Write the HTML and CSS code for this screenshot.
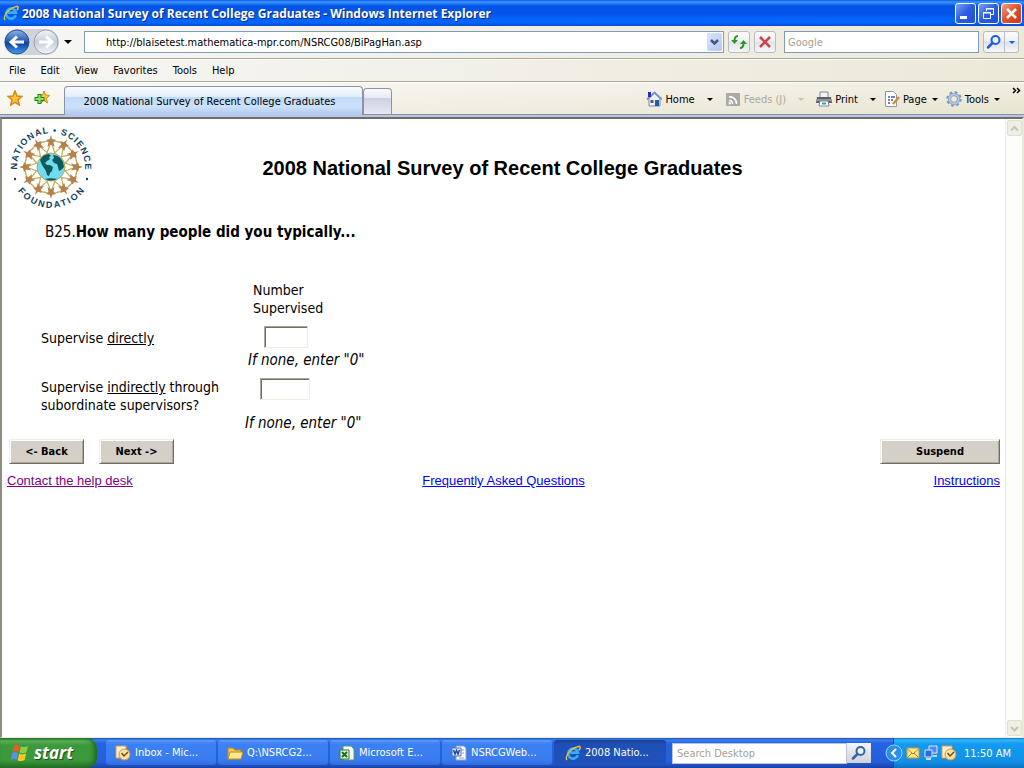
FILE: index.html
```
<!DOCTYPE html>
<html lang="en">
<head>
    <meta charset="utf-8">
    <title>2008 National Survey of Recent College Graduates</title>
    <link rel="stylesheet" href="styles.css">
</head>
<body>
    <!-- Shared icons -->
    <svg class="defs" width="0" height="0" aria-hidden="true">
        <defs>
            <linearGradient id="ballBlue" x1="0" y1="0" x2="0" y2="1">
                <stop offset="0" stop-color="#8fb2e6"/>
                <stop offset="0.45" stop-color="#2a5cb8"/>
                <stop offset="0.55" stop-color="#0b3f9e"/>
                <stop offset="1" stop-color="#4aa0f2"/>
            </linearGradient>
            <linearGradient id="ballGray" x1="0" y1="0" x2="0" y2="1">
                <stop offset="0" stop-color="#f4f6f9"/>
                <stop offset="0.5" stop-color="#c3ccd8"/>
                <stop offset="1" stop-color="#f6f9fc"/>
            </linearGradient>
            <symbol id="ie" viewBox="0 0 16 16">
                <path d="M12.8 10.3A5 5 0 1 1 13 7.6H5" fill="none" stroke="#35aef5" stroke-width="2.6"/>
                <path d="M2 15C-.5 12 5 3 14.500 1.300c1.500 1 .3 3-.6 4" fill="none" stroke="#f3bd3c" stroke-width="1.400"/>
            </symbol>
            <symbol id="outlook" viewBox="0 0 16 16">
                <path d="M1 1h10v4L5 13H1z" fill="#fff3dc" stroke="#e6953c"/>
                <circle cx="9.500" cy="9.500" r="5.500" fill="#fbe2ab" stroke="#e08a2c"/>
                <path d="M6.500 8l2.500 3 4-4" fill="none" stroke="#7a4a10" stroke-width="1.500"/>
            </symbol>
            <symbol id="lens" viewBox="0 0 16 16">
                <circle cx="9.500" cy="6" r="4" fill="#eaf4ff" stroke="currentColor" stroke-width="2"/>
                <path d="M6.500 9L2 13.500" stroke="currentColor" stroke-width="2.500" stroke-linecap="round"/>
            </symbol>
            <symbol id="person" viewBox="-8 -12 16 24">
                <path d="M-7.500 0L-4-1 0-1.500 4-1 7.500 0M0 0L-4 11M0 0L4 11" stroke="#c4aa5c" stroke-width="1.200" fill="none"/>
                <path d="M0-7l1.200 4L5-2 2.500 0.500 3.500 5 0 2.500-3.500 5-2.500 0.500-5-2-1.200-3z" fill="#b5814c"/>
            </symbol>
        </defs>
    </svg>

    <header class="titlebar">
        <svg class="icon"><use href="#ie"/></svg>
        <span class="titlebar-text">2008 National Survey of Recent College Graduates - Windows Internet Explorer</span>
        <div class="window-buttons">
            <button class="win-btn" aria-label="Minimize"><svg width="19" height="19"><path d="M4 13.500h7" stroke="#fff" stroke-width="3"/></svg></button>
            <button class="win-btn" aria-label="Restore"><svg width="19" height="19" fill="none" stroke="#fff"><path d="M7.500 7V4.500h7v6H12M7 5h8M4.500 8.500h7v6h-7zM4 9h8"/></svg></button>
            <button class="win-btn win-close" aria-label="Close"><svg width="19" height="19"><path d="M5 5l9 9M14 5l-9 9" stroke="#fff" stroke-width="2.500"/></svg></button>
        </div>
    </header>

    <div class="navbar">
        <div class="nav-balls">
            <button class="ball" aria-label="Back"><svg width="26" height="26"><circle cx="13" cy="13" r="12" fill="url(#ballBlue)" stroke="#2d4f8c"/><path d="M20 13H8M13 7.500L7 13l6 5.500" fill="none" stroke="#fff" stroke-width="3"/></svg></button>
            <button class="ball" aria-label="Forward"><svg width="26" height="26"><circle cx="13" cy="13" r="12" fill="url(#ballGray)" stroke="#98a2b0"/><path d="M6 13h12M13 7.500l6 5.500-6 5.500" fill="none" stroke="#fff" stroke-width="3"/></svg></button>
        </div>
        <button class="arrow nav-arrow" aria-label="Recent pages"></button>
        <div class="address">
            <input type="text" aria-label="Address" value="http://blaisetest.mathematica-mpr.com/NSRCG08/BiPagHan.asp">
            <button class="address-drop" aria-label="Show addresses"><svg width="15" height="18"><path d="M4 7l3.500 3.500L11 7" fill="none" stroke="#41557d" stroke-width="2.500"/></svg></button>
        </div>
        <button class="tool-btn" aria-label="Refresh"><svg width="20" height="20"><path d="M9 4C6 4 5.500 6 5.500 9" fill="none" stroke="#2d9a1c" stroke-width="2"/><path d="M2 8h7l-3.500 4z" fill="#2d9a1c"/><path d="M11 16c3 0 3.500-2 3.500-5" fill="none" stroke="#2d9a1c" stroke-width="2"/><path d="M11 12h7l-3.500-4z" fill="#2d9a1c"/></svg></button>
        <button class="tool-btn" aria-label="Stop"><svg width="20" height="20"><path d="M5 5l10 10M15 5L5 15" stroke="#c8474a" stroke-width="2.500"/></svg></button>
        <input class="web-search" type="text" aria-label="Search" placeholder="Google">
        <div class="search-go">
            <button class="tool-btn" aria-label="Search"><svg class="icon blue"><use href="#lens"/></svg></button>
            <button class="tool-btn go-drop" aria-label="Search options"><i class="arrow blue"></i></button>
        </div>
    </div>

    <nav class="menubar">
        <button>File</button>
        <button>Edit</button>
        <button>View</button>
        <button>Favorites</button>
        <button>Tools</button>
        <button>Help</button>
    </nav>

    <div class="tabbar">
        <div class="favorites">
            <button aria-label="Favorites Center"><svg class="icon" viewBox="0 0 16 16"><path d="M8 1l2 5 5 .4-4 3.400 1.300 5.200L8 12.300 3.700 15 5 9.800 1 6.400 6 6z" fill="#ffc63a" stroke="#d98716" stroke-width="1.500"/></svg></button>
            <button aria-label="Add to Favorites"><svg class="icon" viewBox="0 0 16 16"><path d="M10 1l1.600 4 4 .4-3.200 3L13.500 13 10 10.500 6.500 13l1-4.600-3-3 4-.4z" fill="#ffc63a" stroke="#d98716"/><path d="M5.500 4v10M.5 9h10" stroke="#1c8a1c" stroke-width="4"/><path d="M5.500 5v8M1.500 9h8" stroke="#8fe06d" stroke-width="2"/></svg></button>
        </div>
        <button class="tab">2008 National Survey of Recent College Graduates</button>
        <button class="tab-new" aria-label="New Tab"></button>
        <div class="commands">
            <button class="command cmd-home"><svg class="icon" viewBox="0 0 16 16"><path d="M3 7v8h11V7L8.500 2z" fill="#eef1f8" stroke="#7d89a8"/><path d="M1 8.500L8.500 1.500 16 8.500" fill="none" stroke="#7c8fd0" stroke-width="2"/><path d="M2 1h3v5H2z" fill="#1c31c4"/><path d="M9 9h4v6H9z" fill="#2458a8"/><path d="M4.500 9h3v3h-3z" fill="#555c70"/></svg>Home<i class="arrow"></i></button>
            <button class="command cmd-feeds" disabled><svg class="icon" viewBox="0 0 16 16"><rect x="1" y="2" width="14" height="13" rx="1" fill="#aaa9a2"/><path d="M4 6a6.500 6.500 0 0 1 7.500 7M4 9.500a3 3 0 0 1 3.500 3.500" fill="none" stroke="#fff" stroke-width="1.600"/><circle cx="4.800" cy="12.300" r="1.200" fill="#fff"/></svg>Feeds (J)<i class="arrow"></i></button>
            <button class="command cmd-print"><svg class="icon" viewBox="0 0 16 16"><path d="M4 1h8v6H4z" fill="#f4f4f4" stroke="#888"/><path d="M1 6h14l1 6H0z" fill="#5c6068"/><path d="M1 9h14" stroke="#c5c9cf"/><path d="M4 10h8l1 5H3z" fill="#fff" stroke="#888"/><path d="M6 12.500h4" stroke="#2aa5c4" stroke-width="2"/></svg>Print<i class="arrow"></i></button>
            <button class="command cmd-page"><svg class="icon" viewBox="0 0 16 16"><path d="M1.500 .5h8l3 3v12h-11z" fill="#fff" stroke="#8e95a5"/><path d="M4 6h2M4 9h2M4 12h2M7 6h4M7 9h2" stroke="#4a59a8" stroke-width="1.500"/><path d="M15 6l-6 7" stroke="#d08a3a" stroke-width="2.500"/></svg>Page<i class="arrow"></i></button>
            <button class="command cmd-tools"><svg class="icon" viewBox="0 0 16 16"><circle cx="8" cy="8" r="6.500" fill="none" stroke="#7d97b8" stroke-width="2.500" stroke-dasharray="2.600 2.500"/><circle cx="8" cy="8" r="4.500" fill="none" stroke="#8fa9c8" stroke-width="3.500"/><circle cx="8" cy="8" r="4.500" fill="none" stroke="#b5cbe2" stroke-width="1.500"/></svg>Tools<i class="arrow"></i></button>
            <button class="more" aria-label="More"><svg width="9" height="7"><path d="M1 1l2.500 2.500L1 6M5 1l2.500 2.500L5 6" fill="none" stroke="#000" stroke-width="1.500"/></svg></button>
        </div>
    </div>

    <div class="viewport">
        <main class="page">
            <div class="page-head">
                <svg class="logo" viewBox="0 0 88 88" role="img" aria-label="National Science Foundation">
                    <path id="arcTop" d="M12.500 56A34 34 0 1 1 75.500 56" fill="none"/>
                    <path id="arcBottom" d="M5.900 58A41 41 0 0 0 82.100 58" fill="none"/>
                    <g>
                        <use href="#person" x="36" y="6" width="16" height="24"/>
                        <use href="#person" x="36" y="6" width="16" height="24" transform="rotate(30 44 43)"/>
                        <use href="#person" x="36" y="6" width="16" height="24" transform="rotate(60 44 43)"/>
                        <use href="#person" x="36" y="6" width="16" height="24" transform="rotate(90 44 43)"/>
                        <use href="#person" x="36" y="6" width="16" height="24" transform="rotate(120 44 43)"/>
                        <use href="#person" x="36" y="6" width="16" height="24" transform="rotate(150 44 43)"/>
                        <use href="#person" x="36" y="6" width="16" height="24" transform="rotate(180 44 43)"/>
                        <use href="#person" x="36" y="6" width="16" height="24" transform="rotate(210 44 43)"/>
                        <use href="#person" x="36" y="6" width="16" height="24" transform="rotate(240 44 43)"/>
                        <use href="#person" x="36" y="6" width="16" height="24" transform="rotate(270 44 43)"/>
                        <use href="#person" x="36" y="6" width="16" height="24" transform="rotate(300 44 43)"/>
                        <use href="#person" x="36" y="6" width="16" height="24" transform="rotate(330 44 43)"/>
                    </g>
                    <circle cx="44" cy="43" r="14" fill="#6fdcf0" stroke="#c0a34a"/>
                    <path d="M33 36c2-4 5-6 9-6l2 2-2 1 1 2-3 2-2 2 2 2 3 0 3 2-1 4-2 2-1 3-2-1-1-4-2-3-2-3z" fill="#0d5a5c"/>
                    <path d="M46 31c5 0 8 3 10 7l1 5-3 3-2 1-1-4-1-3-3-1-2-3 2-2z" fill="#0d5a5c"/>
                    <path d="M38 55c4-1 8-1 12 0-4 2-8 2-12 0z" fill="#0d5a5c"/>
                    <g class="logo-text">
                        <text dx="0 1 1 1 1 1 1 1 1 1 1 1 1 1 1 1 1 1"><textPath href="#arcTop" startOffset="50%">NATIONAL • SCIENCE</textPath></text>
                        <text dx="0 2 2 2 2 2 2 2 2 2"><textPath href="#arcBottom" startOffset="50%">FOUNDATION</textPath></text>
                    </g>
                    <circle cx="8" cy="55" r="1.200" fill="#123f5e"/>
                    <circle cx="80" cy="55" r="1.200" fill="#123f5e"/>
                </svg>
                <h1>2008 National Survey of Recent College Graduates</h1>
            </div>

            <form class="survey">
                <p class="question">B25.<b>How many people did you typically...</b></p>
                <table class="answers">
                    <thead>
                        <tr>
                            <td></td>
                            <th scope="col">Number<br>Supervised</th>
                        </tr>
                    </thead>
                    <tbody>
                        <tr class="row-direct">
                            <td><label for="direct">Supervise <u>directly</u></label></td>
                            <td><input type="text" id="direct" name="direct"><em>If none, enter "0"</em></td>
                        </tr>
                        <tr class="row-indirect">
                            <td><label for="indirect">Supervise <u>indirectly</u> through<br>subordinate supervisors?</label></td>
                            <td><input type="text" id="indirect" name="indirect"><em>If none, enter "0"</em></td>
                        </tr>
                    </tbody>
                </table>
                <div class="actions">
                    <button type="button">&lt;- Back</button>
                    <button type="button">Next -&gt;</button>
                    <button type="button" class="suspend">Suspend</button>
                </div>
            </form>

            <footer class="links">
                <a class="visited" href="#help">Contact the help desk</a>
                <a href="#faq">Frequently Asked Questions</a>
                <a href="#instructions">Instructions</a>
            </footer>
        </main>
        <div class="scrollbar">
            <button aria-label="Scroll up"><svg width="13" height="13"><path d="M3 8.500L6.500 5 10 8.500" fill="none" stroke="#c5c4b8" stroke-width="2"/></svg></button>
            <button aria-label="Scroll down"><svg width="13" height="13"><path d="M3 5l3.500 3.500L10 5" fill="none" stroke="#c5c4b8" stroke-width="2"/></svg></button>
        </div>
    </div>

    <div class="taskbar">
        <button class="start">
            <svg width="20" height="20" viewBox="0 0 20 20"><path d="M4 3c2-1.500 4-1.500 6-.3L8.500 9c-2-1.200-4-1.200-6 .2z" fill="#ee5a2a"/><path d="M11 3.200c2 1.200 4 1.200 7-.2l-1.600 6.300c-2 1.400-5 1.400-7 .2z" fill="#8ccf42"/><path d="M2.200 10.300c2-1.400 4-1.400 6-.2L6.700 16.600c-2-1.200-4-1.200-6 .2z" fill="#5b8ff0"/><path d="M9.200 10.600c2 1.200 4 1.200 7-.2L14.600 17c-2 1.400-5 1.400-7 .2z" fill="#ffca28"/></svg>
            start
        </button>
        <div class="tasks">
            <button class="task"><svg class="icon"><use href="#outlook"/></svg>Inbox - Mic...</button>
            <button class="task"><svg class="icon" viewBox="0 0 16 16"><path d="M1 3h5l2 2h6v9H1z" fill="#f1c84b" stroke="#b98a1c"/><path d="M3 7h13l-2 7H1z" fill="#ffe98c" stroke="#b98a1c"/></svg>Q:\NSRCG2...</button>
            <button class="task"><svg class="icon" viewBox="0 0 16 16"><path d="M4 1h8l3 3v11H4z" fill="#fff" stroke="#5c9a55"/><path d="M1 5h9v9H1z" fill="#e2f4dd" stroke="#2f7d2f"/><path d="M3 7l5 5M8 7l-5 5" stroke="#1d6b27" stroke-width="2"/></svg>Microsoft E...</button>
            <button class="task"><svg class="icon" viewBox="0 0 16 16"><path d="M5 1h8l2 2v12H5z" fill="#fff" stroke="#8b9cc4"/><path d="M8 5h5M11 8h2M8 13h5" stroke="#8b9cc4"/><path d="M1 3h9v8H1z" fill="#dbe6fa" stroke="#5572b5"/><path d="M2.500 5l1.500 4 1.500-3.500L7 9l1.500-4" fill="none" stroke="#2546a0" stroke-width="1.500"/></svg>NSRCGWeb...</button>
            <button class="task active"><svg class="icon"><use href="#ie"/></svg>2008 Natio...</button>
        </div>
        <div class="desk-search">
            <input type="text" aria-label="Search Desktop" placeholder="Search Desktop">
            <button aria-label="Search"><svg class="icon"><use href="#lens"/></svg></button>
        </div>
        <div class="tray">
            <button class="tray-toggle" aria-label="Show hidden icons"><svg width="18" height="18"><circle cx="9" cy="9" r="8" fill="#2a8fee" stroke="#9ad2ff"/><path d="M11 5L7 9l4 4" fill="none" stroke="#fff" stroke-width="2"/></svg></button>
            <svg class="icon" viewBox="0 0 16 16"><path d="M2 3h12v10H2z" fill="#fbe68a" stroke="#c99a2a"/><path d="M2 3.500l6 5.500 6-5.500M2 13l5-5M14 13L9 8" fill="none" stroke="#b8862a"/></svg>
            <svg class="icon" viewBox="0 0 16 16"><path d="M6 1h8v7H6z" fill="#4d8af0" stroke="#d7e6fa"/><path d="M2 5h7v7H2z" fill="#2f6ad8" stroke="#d7e6fa"/><path d="M3 14h5M10 11h4" stroke="#d5d5d5" stroke-width="2"/></svg>
            <svg class="icon"><use href="#outlook"/></svg>
            <time>11:50 AM</time>
        </div>
    </div>
</body>
</html>
```
FILE: styles.css
```
* {
    box-sizing: border-box;
}

html,
body {
    height: 100%;
}

body {
    margin: 0;
    display: flex;
    flex-direction: column;
    overflow: hidden;
    background: #fff;
    font-family: "DejaVu Sans Condensed", "Open Sans", sans-serif;
    font-size: 11px;
    color: #000;
}

button {
    margin: 0;
    padding: 0;
    border: 0;
    background: none;
    font: inherit;
    color: inherit;
}

input {
    margin: 0;
    font: inherit;
    outline: none;
}

svg {
    display: block;
    flex: none;
}

.defs {
    position: absolute;
}

.icon {
    width: 16px;
    height: 16px;
}

.arrow {
    width: 0;
    height: 0;
    border: 3px solid transparent;
    border-top-color: #000;
    border-bottom: 0;
}

.blue {
    color: #1e5ee0;
}

.arrow.blue {
    border-top-color: #0c59e8;
}

/* Title bar */
.titlebar {
    display: flex;
    align-items: center;
    height: 26px;
    flex: none;
    padding: 0 2px 0 3px;
    background: linear-gradient(#0a5be8 0, #3b95ff 2px, #0354e6 6px, #0355e8 14px, #0366ff 20px, #0364fb 23px, #0148d0 26px);
}

.titlebar-text {
    margin-left: 3px;
    font-family: "Open Sans", sans-serif;
    font-size: 12px;
    font-weight: bold;
    color: #fff;
    text-shadow: 1px 1px 0 #0a2a80;
    white-space: nowrap;
}

.window-buttons {
    display: flex;
    gap: 2px;
    margin-left: auto;
}

.win-btn {
    width: 21px;
    height: 21px;
    border: 1px solid #fff;
    border-radius: 3px;
    background: linear-gradient(135deg, #7ba0f5, #2a5be0 50%, #1c50dc);
}

.win-close {
    background: linear-gradient(135deg, #f0a080, #e0502c 50%, #c83c10);
}

/* Address row */
.navbar {
    display: flex;
    align-items: center;
    height: 33px;
    flex: none;
    padding: 0 5px 0 4px;
    background: linear-gradient(90deg, #f6f6f4, #ece9d8);
    border-bottom: 1px solid #aca899;
}

.nav-balls {
    display: flex;
    gap: 3px;
    border-radius: 14px;
    background: #cfd3da;
}

.nav-arrow {
    margin: 0 12px 0 5px;
    border-width: 4px 4px 0;
}

.address {
    display: flex;
    align-items: center;
    flex: 1;
    height: 22px;
    margin-right: 4px;
    border: 1px solid #7f9db9;
    background: #fff;
}

.address input {
    flex: 1;
    min-width: 0;
    padding: 0 0 0 21px;
    border: 0;
    background: none;
}

.address-drop {
    margin-right: 1px;
    border-radius: 2px;
    background: linear-gradient(135deg, #dbe5fd, #b0c6f5);
}

.tool-btn {
    display: flex;
    align-items: center;
    justify-content: center;
    width: 22px;
    height: 22px;
    margin-right: 4px;
    border: 1px solid #b9bcc4;
    border-radius: 3px;
    background: linear-gradient(#fcfcfc, #eef0f5 45%, #dfe2ea 50%, #f6f6f8);
}

.web-search {
    width: 195px;
    height: 22px;
    margin: 0 4px;
    padding: 0 3px;
    border: 1px solid #7f9db9;
}

.web-search::placeholder,
.desk-search input::placeholder {
    color: #a5a295;
}

.search-go {
    display: flex;
}

.search-go .tool-btn {
    margin: 0;
    border-radius: 3px 0 0 3px;
}

.search-go .go-drop {
    width: 14px;
    border-left: 0;
    border-radius: 0 3px 3px 0;
}

/* Menu row */
.menubar {
    display: flex;
    align-items: center;
    gap: 15px;
    height: 23px;
    flex: none;
    padding: 0 9px;
    background: linear-gradient(90deg, #f6f6f4, #ece9d8);
    border-top: 1px solid #fff;
    border-bottom: 1px solid #aca899;
}

/* Tabs and command bar */
.tabbar {
    display: flex;
    align-items: flex-end;
    height: 35px;
    flex: none;
    background: linear-gradient(90deg, rgba(255, 255, 255, 0.6), rgba(255, 255, 255, 0)), linear-gradient(#f2efe3, #e7e4d0);
    border-top: 1px solid #fff;
    border-bottom: 2px solid #b3c7ee;
    box-shadow: inset 0 -1px #919191;
}

.favorites {
    display: flex;
    align-self: center;
    gap: 11px;
    padding: 0 14px 3px 7px;
}

.tab,
.tab-new {
    border: 1px solid #8c93a6;
    border-bottom: 0;
    border-radius: 4px 4px 0 0;
}

.tab {
    width: 299px;
    height: 29px;
    padding-right: 8px;
    white-space: nowrap;
    background: linear-gradient(#fafcff, #e3eefc 34%, #bfdafa 36%, #cbe1fb 70%, #b3c7ee);
}

.tab-new {
    width: 29px;
    height: 27px;
    background: linear-gradient(#fbfbfd, #e8e9f3 34%, #cdd0e2 36%, #e6e8f3);
    border-bottom: 1px solid #919191;
}

.commands {
    display: flex;
    align-items: center;
    flex: 1;
    justify-content: flex-end;
    height: 32px;
    padding-right: 3px;
}

.command {
    display: flex;
    align-items: center;
    gap: 3px;
    margin-right: 8px;
}

.command .arrow {
    margin-left: 2px;
}

.cmd-home .arrow,
.cmd-feeds .arrow,
.cmd-print .arrow {
    margin-left: 9px;
}

.cmd-home,
.cmd-feeds,
.cmd-tools {
    margin-right: 12px;
}

.command:disabled {
    color: #aca899;
}

.command:disabled .arrow {
    border-top-color: #c5c2b2;
}

.more {
    align-self: flex-start;
    padding-top: 4px;
}

/* Survey page */
.viewport {
    display: flex;
    flex: 1;
    min-height: 0;
    border: solid #716f64;
    border-width: 2px 0 0 2px;
    border-left-color: #8f8d80;
    border-bottom: 1px solid #ece9d8;
    border-right: 2px solid #ece9d8;
}

.page {
    flex: 1;
    padding: 5px 5px 0 5px;
    font-family: "Liberation Sans", Arial, sans-serif;
    font-size: 13px;
}

.page-head {
    display: flex;
    align-items: center;
    height: 88px;
}

.logo {
    width: 88px;
    height: 88px;
}

.logo-text {
    font-size: 9px;
    font-weight: bold;
    text-anchor: middle;
    fill: #123f5e;
}

.page-head h1 {
    flex: 1;
    margin: 0;
    padding-right: 90px;
    font-size: 20px;
    text-align: center;
}

.survey {
    font-family: "DejaVu Sans Condensed", "Open Sans", sans-serif;
    font-size: 14px;
    line-height: 18px;
}

.question {
    margin: 11px 0 40px 38px;
    font-size: 15px;
}

.answers {
    margin-left: 34px;
    border-collapse: collapse;
}

.answers th,
.answers td {
    padding: 0;
    text-align: left;
    font-weight: normal;
    vertical-align: top;
}

.answers th {
    padding: 0 0 9px 12px;
}

.answers td:first-child {
    width: 200px;
}

.answers input {
    display: block;
    width: 44px;
    height: 22px;
    margin-left: 23px;
    border: 1px solid;
    border-color: #aca899 #f1efe2 #f1efe2 #aca899;
    box-shadow: inset 1px 1px #716f64;
}

.answers em {
    display: block;
    padding: 3px 0 9px 7px;
    font-size: 15px;
}

.row-direct label {
    display: block;
    padding-top: 3px;
}

.row-indirect input {
    width: 50px;
    margin-left: 19px;
}

.row-indirect em {
    padding: 14px 0 7px 4px;
}

.actions {
    display: flex;
    gap: 15px;
    padding-left: 2px;
}

.actions button {
    width: 75px;
    height: 25px;
    border: 1px solid;
    border-color: #f1efe2 #716f64 #716f64 #f1efe2;
    box-shadow: inset 1px 1px #fff, inset -1px -1px #aca899;
    background: #d4d0c8;
    font-size: 11px;
    font-weight: bold;
}

.actions .suspend {
    width: 120px;
    margin-left: auto;
}

.links {
    display: grid;
    grid-template-columns: 1fr auto 1fr;
    margin-top: 9px;
}

.links a {
    justify-self: start;
    color: #0000ff;
}

.links a:last-child {
    justify-self: end;
}

.links .visited {
    color: #800080;
}

.scrollbar {
    display: flex;
    flex-direction: column;
    justify-content: space-between;
    width: 17px;
    padding: 1px;
    background: #fdfdfa;
    border-left: 1px solid #eeede5;
}

.scrollbar button {
    width: 15px;
    height: 16px;
    border: 1px solid #e0dfd3;
    border-radius: 2px;
    background: #f0efe6;
}

/* Taskbar */
.taskbar {
    display: flex;
    align-items: stretch;
    height: 30px;
    flex: none;
    color: #fff;
    background: linear-gradient(#1f52b8 0, #3a82ef 2px, #2663e0 5px, #245edb 24px, #1941a5 30px);
}

.start {
    display: flex;
    align-items: center;
    gap: 4px;
    width: 97px;
    padding-left: 10px;
    border-radius: 0 10px 10px 0;
    background: linear-gradient(#2f7d2f 0, #5fb25c 3px, #3c9a3c 7px, #3a993a 22px, #276e27 30px);
    box-shadow: inset -3px 0 4px #1f6a24;
    font-family: "Open Sans", sans-serif;
    font-size: 17px;
    font-weight: bold;
    font-style: italic;
    line-height: 20px;
    text-shadow: 1px 1px 1px #1c4a1c;
}

.tasks {
    display: flex;
    flex: 1;
    gap: 2px;
    padding: 2px 6px 3px 9px;
}

.task {
    display: flex;
    align-items: center;
    gap: 4px;
    flex: 1;
    min-width: 0;
    padding-left: 9px;
    border-radius: 3px;
    white-space: nowrap;
    background: linear-gradient(#5d9bfa 0, #3c81f3 4px, #3a7cf0 20px, #2f6ae0);
}

.task.active {
    padding-left: 11px;
    background: linear-gradient(#173d8f, #1e4fb5 4px, #1f52ba);
}

.desk-search {
    display: flex;
    align-items: center;
    margin-right: 22px;
}

.desk-search input {
    width: 175px;
    height: 21px;
    padding: 0 4px;
    border: 1px solid #b8c4dc;
}

.desk-search button {
    display: flex;
    align-items: center;
    justify-content: center;
    width: 24px;
    height: 20px;
    background: linear-gradient(#f5f6f8, #cfd3da);
    color: #3467a8;
}

.tray {
    display: flex;
    align-items: center;
    gap: 2px;
    padding-right: 13px;
    background: linear-gradient(#0f7cd0 0, #35b6f8 2px, #139af0 6px, #1290e8 24px, #0c6fc0 30px);
    border-left: 1px solid #0a4fa8;
}

/* The round handle straddles the edge of the tray */
.tray-toggle {
    margin-left: -9px;
}

.tray time {
    margin-left: 5px;
}
```
